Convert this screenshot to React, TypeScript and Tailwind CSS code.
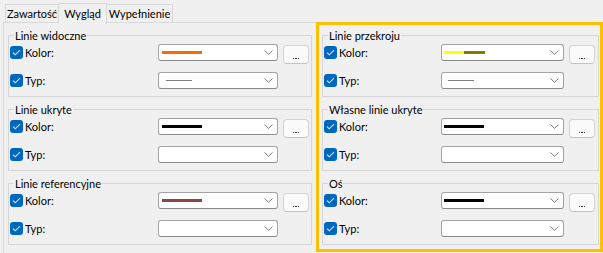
import React from "react";

const Check = () => (
  <div className="w-[13px] h-[13px] rounded-[3px] bg-[#0067c0] flex items-center justify-center shrink-0">
    <svg width="9" height="7" viewBox="0 0 9 7">
      <path d="M1 3.6 L3.3 5.8 L8 1.2" fill="none" stroke="#dbe9f7" strokeWidth="1.1" />
    </svg>
  </div>
);

const Chevron = () => (
  <svg width="9" height="5" viewBox="0 0 9 5" className="shrink-0">
    <path d="M0.5 0.5 L4.5 4.3 L8.5 0.5" fill="none" stroke="#7a7a7a" strokeWidth="1" />
  </svg>
);

type Swatch = { kind: "color"; colors: string[] } | { kind: "line" } | { kind: "none" };

const Combo = ({ w, swatch, inset }: { w: string; swatch: Swatch; inset: string }) => (
  <div className={`${w} h-[17px] bg-white border border-[#a3a3a3] border-b-[#8a8a8a] rounded-[3px] flex items-center justify-between pr-[4px] shrink-0`}>
    <div className={`flex items-center ${inset}`}>
      {swatch.kind === "color" && (
        <div className="flex">
          {swatch.colors.length === 1 ? (
            <div className="w-[40px] h-[3px]" style={{ background: swatch.colors[0] }} />
          ) : (
            <>
              <div className="w-[20px] h-[3px] bg-[#ffff00]" />
              <div className="w-[21px] h-[3px] bg-[#808000]" />
            </>
          )}
        </div>
      )}
      {swatch.kind === "line" && <div className="ml-[4px] w-[26px] h-[1.5px] bg-[#7d7d7d]" />}
    </div>
    <Chevron />
  </div>
);

const Dots = () => (
  <div className="w-[26px] h-[19px] bg-[#fbfbfb] border border-[#d3d3d3] border-b-[#c2c2c2] rounded-[4px] flex items-end justify-center pb-[4px] self-start mt-[1px] shrink-0">
    <div className="flex gap-[1px]">
      <div className="w-[1.5px] h-[1.5px] bg-[#404050]" />
      <div className="w-[1.5px] h-[1.5px] bg-[#504040]" />
      <div className="w-[1.5px] h-[1.5px] bg-[#404050]" />
    </div>
  </div>
);

const Row = ({
  label,
  labelW,
  comboW,
  swatch,
  button,
  inset,
}: {
  label: string;
  labelW: string;
  comboW: string;
  swatch: Swatch;
  button?: boolean;
  inset: string;
}) => (
  <div className="flex items-center h-[17px]">
    <div className={`flex items-center ${labelW} shrink-0`}>
      <Check />
      <span className="ml-[2px] leading-none">{label}</span>
    </div>
    <Combo w={comboW} swatch={swatch} inset={inset} />
    {button && <div className="ml-[5px] flex h-[17px]"><Dots /></div>}
  </div>
);

const Group = ({
  title,
  color,
  typ,
  side,
}: {
  title: string;
  color: Swatch;
  typ: Swatch;
  side: "l" | "r";
}) => {
  const labelW = side === "l" ? "w-[148px]" : "w-[117px]";
  const comboW = side === "l" ? "w-[120px]" : "w-[123px]";
  const inset = side === "l" ? "pl-[3px]" : "pl-[2px]";
  return (
    <div className="relative border border-[#d6d6d6] h-[62px] pl-[1px] pt-[8px] flex flex-col gap-[11px]">
      <span className="absolute left-[5px] -top-[8px] px-[1px] bg-[#f0f0f0] leading-[15px] whitespace-nowrap">{title}</span>
      <Row label="Kolor:" labelW={labelW} comboW={comboW} swatch={color} button inset={inset} />
      <Row label="Typ:" labelW={labelW} comboW={comboW} swatch={typ} inset={inset} />
    </div>
  );
};

export default function App() {
  return (
    <div className="w-[603px] h-[253px] bg-[#f0f0f0] overflow-hidden text-[11px] text-black font-['Lato','Noto_Sans',sans-serif]">
      <div className="flex items-end h-[23px] pl-[5px] whitespace-nowrap">
        <div className="h-[19px] w-[54px] border border-b-0 border-[#d9d9d9] flex items-center justify-center">Zawartość</div>
        <div className="h-[21px] w-[48px] border border-b-0 border-l-0 border-[#d9d9d9] bg-[#f0f0f0] flex items-center justify-center pt-[1px] relative top-[1px] -mt-[1px]">Wygląd</div>
        <div className="h-[19px] w-[66px] border border-b-0 border-l-0 border-[#d9d9d9] flex items-center justify-center">Wypełnienie</div>
      </div>
      <div className="ml-[3px] -mt-[1px] border-t border-l border-[#d9d9d9] h-[231px] flex">
        <div className="pl-[4px] pt-[12px] w-[308px] shrink-0 flex flex-col gap-[12px]">
          <Group title="Linie widoczne" side="l" color={{ kind: "color", colors: ["#ff6a00"] }} typ={{ kind: "line" }} />
          <Group title="Linie ukryte" side="l" color={{ kind: "color", colors: ["#000000"] }} typ={{ kind: "none" }} />
          <Group title="Linie referencyjne" side="l" color={{ kind: "color", colors: ["#8a4844"] }} typ={{ kind: "none" }} />
        </div>
        <div className="ml-[4px] -mt-[1px] w-[287px] h-[230px] border-[3px] border-[#ffc000] pl-[3px] pr-[1px] pt-[10px] flex flex-col gap-[12px]">
          <Group title="Linie przekroju" side="r" color={{ kind: "color", colors: ["#ffff00", "#808000"] }} typ={{ kind: "line" }} />
          <Group title="Własne linie ukryte" side="r" color={{ kind: "color", colors: ["#000000"] }} typ={{ kind: "none" }} />
          <Group title="Oś" side="r" color={{ kind: "color", colors: ["#000000"] }} typ={{ kind: "none" }} />
        </div>
      </div>
    </div>
  );
}
